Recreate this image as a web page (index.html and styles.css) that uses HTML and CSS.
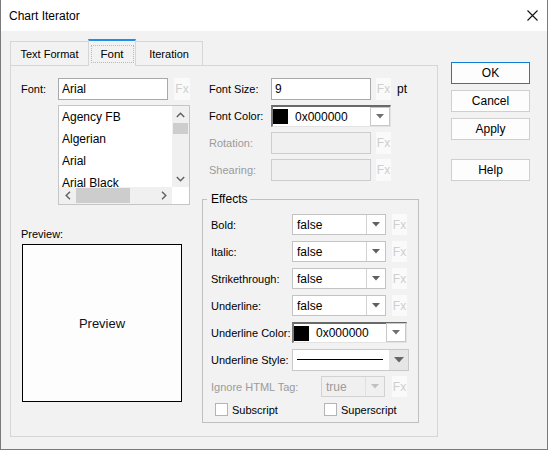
FILE: index.html
```html
<!DOCTYPE html>
<html>
<head>
<meta charset="utf-8">
<link rel="stylesheet" href="styles.css">
</head>
<body>
<div class="window">
  <div class="titlebar">
    <span class="title">Chart Iterator</span>
    <svg class="close" width="11" height="11" viewBox="0 0 11 11"><path d="M0.5 0.5L10.5 10.5M10.5 0.5L0.5 10.5" stroke="#111" stroke-width="1.1" fill="none"/></svg>
  </div>
  <div class="body">
    <div class="tabs-area">
      <div class="tabstrip">
        <div class="tab tab-text">Text Format</div>
        <div class="tab tab-font active"><span class="focus">Font</span></div>
        <div class="tab tab-iter">Iteration</div>
      </div>
      <div class="panel">
        <div class="left-col">
          <div class="row">
            <span class="lbl lbl-font">Font:</span>
            <div class="input w110">Arial</div>
            <span class="fx fx-font">Fx</span>
          </div>
          <div class="listbox">
            <div class="items">
              <div class="item">Agency FB</div>
              <div class="item">Algerian</div>
              <div class="item">Arial</div>
              <div class="item">Arial Black</div>
            </div>
            <div class="vscroll">
              <div class="sbtn"><svg width="9" height="6" viewBox="0 0 9 6"><polyline points="0.8,5 4.5,1.2 8.2,5" fill="none" stroke="#606060" stroke-width="1.4"/></svg></div>
              <div class="vthumb"></div>
              <div class="spacer"></div>
              <div class="sbtn"><svg width="9" height="6" viewBox="0 0 9 6"><polyline points="0.8,1 4.5,4.8 8.2,1" fill="none" stroke="#606060" stroke-width="1.4"/></svg></div>
            </div>
            <div class="hscroll">
              <div class="sbtn"><svg width="6" height="9" viewBox="0 0 6 9"><polyline points="5,0.8 1.2,4.5 5,8.2" fill="none" stroke="#606060" stroke-width="1.4"/></svg></div>
              <div class="hthumb"></div>
              <div class="spacer"></div>
              <div class="sbtn"><svg width="6" height="9" viewBox="0 0 6 9"><polyline points="1,0.8 4.8,4.5 1,8.2" fill="none" stroke="#606060" stroke-width="1.4"/></svg></div>
            </div>
            <div class="corner"></div>
          </div>
          <div class="preview-label">Preview:</div>
          <div class="preview">Preview</div>
        </div>
        <div class="right-col">
          <div class="row prow">
            <span class="lbl lbl-right">Font Size:</span>
            <div class="input w100">9</div>
            <span class="fx fx-right">Fx</span>
            <span class="unit">pt</span>
          </div>
          <div class="row prow">
            <span class="lbl lbl-right">Font Color:</span>
            <div class="ccombo w120">
              <span class="swatch"></span>
              <span class="ctext">0x000000</span>
              <span class="cbtn"><svg width="8" height="5" viewBox="0 0 8 5"><polygon points="0,0 8,0 4,4.5" fill="#707070"/></svg></span>
            </div>
          </div>
          <div class="row prow">
            <span class="lbl lbl-right dis">Rotation:</span>
            <div class="input w100 disabled"></div>
            <span class="fx fx-right">Fx</span>
          </div>
          <div class="row prow">
            <span class="lbl lbl-right dis">Shearing:</span>
            <div class="input w100 disabled"></div>
            <span class="fx fx-right">Fx</span>
          </div>
          <fieldset class="effects">
            <legend>Effects</legend>
            <div class="erow">
              <span class="elbl">Bold:</span>
              <div class="combo w94"><span class="ctext">false</span><span class="dbtn"><svg width="8" height="5" viewBox="0 0 8 5"><polygon points="0,0 8,0 4,4.5" fill="#606060"/></svg></span></div>
              <span class="fx fx-eff">Fx</span>
            </div>
            <div class="erow">
              <span class="elbl">Italic:</span>
              <div class="combo w94"><span class="ctext">false</span><span class="dbtn"><svg width="8" height="5" viewBox="0 0 8 5"><polygon points="0,0 8,0 4,4.5" fill="#606060"/></svg></span></div>
              <span class="fx fx-eff">Fx</span>
            </div>
            <div class="erow">
              <span class="elbl">Strikethrough:</span>
              <div class="combo w94"><span class="ctext">false</span><span class="dbtn"><svg width="8" height="5" viewBox="0 0 8 5"><polygon points="0,0 8,0 4,4.5" fill="#606060"/></svg></span></div>
              <span class="fx fx-eff">Fx</span>
            </div>
            <div class="erow">
              <span class="elbl">Underline:</span>
              <div class="combo w94"><span class="ctext">false</span><span class="dbtn"><svg width="8" height="5" viewBox="0 0 8 5"><polygon points="0,0 8,0 4,4.5" fill="#606060"/></svg></span></div>
              <span class="fx fx-eff">Fx</span>
            </div>
            <div class="erow">
              <span class="elbl">Underline Color:</span>
              <div class="ccombo w115">
                <span class="swatch"></span>
                <span class="ctext">0x000000</span>
                <span class="cbtn"><svg width="8" height="5" viewBox="0 0 8 5"><polygon points="0,0 8,0 4,4.5" fill="#707070"/></svg></span>
              </div>
            </div>
            <div class="erow">
              <span class="elbl">Underline Style:</span>
              <div class="scombo w117">
                <span class="sline"></span>
                <span class="sbtn2"><svg width="10" height="6" viewBox="0 0 10 6"><polygon points="0,0 10,0 5,5.5" fill="#666"/></svg></span>
              </div>
            </div>
            <div class="erow">
              <span class="elbl elbl-wide dis">Ignore HTML Tag:</span>
              <div class="combo w64 cdis"><span class="ctext">true</span><span class="dbtn"><svg width="8" height="5" viewBox="0 0 8 5"><polygon points="0,0 8,0 4,4.5" fill="#c0c0c0"/></svg></span></div>
              <span class="fx fx-ign">Fx</span>
            </div>
            <div class="crow">
              <span class="check check-sub"><span class="box"></span><span>Subscript</span></span>
              <span class="check"><span class="box"></span><span>Superscript</span></span>
            </div>
          </fieldset>
        </div>
      </div>
    </div>
    <div class="buttons">
      <div class="btn default">OK</div>
      <div class="btn">Cancel</div>
      <div class="btn">Apply</div>
      <div class="btn help">Help</div>
    </div>
  </div>
</div>
</body>
</html>
```

FILE: styles.css
```css
* { box-sizing: border-box; }
html, body { margin: 0; padding: 0; }
body {
  width: 548px;
  height: 450px;
  font-family: "Liberation Sans", Arial, sans-serif;
  font-size: 11px;
  color: #000;
  background: #f2f2f2;
  overflow: hidden;
}
.window {
  width: 548px;
  height: 450px;
  border: 1px solid #7a7a7a;
  border-top: none;
  display: flex;
  flex-direction: column;
  background: #f2f2f2;
}
.titlebar {
  height: 31px;
  background: #fff;
  display: flex;
  align-items: center;
  justify-content: space-between;
  padding: 0 9px 0 8px;
  flex: none;
}
.title { font-size: 12px; color: #000; }
.close { display: block; }
.body {
  flex: 1;
  display: flex;
  padding: 8px 0 0 9px;
}
.tabs-area {
  width: 428px;
  display: flex;
  flex-direction: column;
}
.tabstrip {
  height: 26px;
  display: flex;
  align-items: flex-end;
}
.tab {
  height: 24px;
  border: 1px solid #d6d6d6;
  border-bottom: none;
  display: flex;
  align-items: center;
  justify-content: center;
  padding-top: 1px;
  background: #f2f2f2;
}
.tab-text { width: 79px; }
.tab-font { width: 48px; margin-left: -1px; }
.tab-iter { width: 68px; margin-left: -1px; }
.tab.active {
  height: 27px;
  border-top: 2px solid #1e8ee6;
  margin-bottom: -1px;
  position: relative;
  z-index: 1;
  align-items: flex-start;
  padding-top: 4px;
  font-size: 11.5px;
}
.focus {
  width: 43px;
  height: 18px;
  border: 1px dotted #b9b9b9;
  display: flex;
  align-items: center;
  justify-content: center;
}
.panel {
  height: 372px;
  border: 1px solid #d6d6d6;
  display: flex;
  gap: 12px;
  padding: 12px 0 0 10px;
}
.left-col {
  width: 169px;
  display: flex;
  flex-direction: column;
}
.right-col {
  width: 217px;
  display: flex;
  flex-direction: column;
  gap: 5px;
}
.row {
  height: 22px;
  display: flex;
  align-items: center;
  flex: none;
}
.prow { padding-left: 7px; }
.lbl { flex: none; }
.lbl-font { width: 37px; }
.lbl-right { width: 62px; }
.dis { color: #9b9b9b; }
.input {
  height: 22px;
  border: 1px solid #a9a9a9;
  background: #fff;
  display: flex;
  align-items: center;
  padding-left: 3px;
  font-size: 12px;
}
.input.disabled { background: #f0f0f0; border-color: #cdcdcd; }
.w110 { width: 110px; }
.w100 { width: 100px; }
.w120 { width: 120px; }
.w115 { width: 115px; }
.w117 { width: 117px; }
.w94 { width: 94px; }
.w64 { width: 64px; }
.fx {
  height: 22px;
  background: #fafafa;
  color: #cfcfcf;
  font-size: 12px;
  display: flex;
  align-items: center;
  justify-content: center;
  flex: none;
}
.fx-font { width: 16px; margin-left: 6px; }
.fx-right { width: 15px; margin-left: 5px; }
.fx-eff { width: 15px; margin-left: 6px; height: 21px; }
.fx-ign { width: 15px; margin-left: 7px; height: 21px; }
.unit { margin-left: 6px; font-size: 12px; }
.listbox {
  margin: 5px 0 0 37px;
  width: 132px;
  height: 100px;
  border: 1px solid #c6c6c6;
  background: #fff;
  display: grid;
  grid-template-columns: 1fr 17px;
  grid-template-rows: 1fr 17px;
  flex: none;
}
.items { padding: 0 0 0 3px; overflow: hidden; }
.item { line-height: 22px; height: 22px; font-size: 12px; white-space: nowrap; }
.vscroll {
  background: #f0f0f0;
  display: flex;
  flex-direction: column;
}
.vscroll .sbtn { height: 17px; display: flex; align-items: center; justify-content: center; }
.vthumb { height: 11px; margin: 0 1px; background: #cdcdcd; }
.spacer { flex: 1; }
.hscroll {
  background: #f0f0f0;
  display: flex;
}
.hscroll .sbtn { width: 17px; display: flex; align-items: center; justify-content: center; }
.hthumb { width: 54px; margin: 1px 0; background: #cdcdcd; }
.corner { background: #fff; }
.preview-label { margin-top: 22px; line-height: 14px; height: 14px; }
.preview {
  margin: 3px 0 0 1px;
  width: 160px;
  height: 158px;
  border: 1px solid #000;
  background: #fcfdfc;
  display: flex;
  align-items: center;
  justify-content: center;
  font-size: 13px;
  color: #101020;
}
.combo {
  height: 21px;
  border: 1px solid #c3c3c3;
  background: #fff;
  display: flex;
  align-items: stretch;
  flex: none;
}
.combo .ctext { flex: 1; display: flex; align-items: center; padding-left: 4px; font-size: 12px; }
.dbtn {
  width: 19px;
  border-left: 1px solid #d2d2d2;
  display: flex;
  align-items: center;
  justify-content: center;
}
.combo.cdis { background: #f0f0f0; border-color: #d2d2d2; color: #9b9b9b; }
.combo.cdis .dbtn { border-left-color: #e0e0e0; }
.ccombo {
  height: 22px;
  border-top: 2px solid #6a6a6a;
  border-left: 2px solid #7a7a7a;
  border-right: 1px solid #e2e2e2;
  border-bottom: 1px solid #e2e2e2;
  background: #fff;
  display: flex;
  align-items: center;
  flex: none;
}
.erow .ccombo { height: 21px; }
.swatch { width: 15px; height: 15px; background: #000; flex: none; }
.ccombo .ctext { flex: 1; padding-left: 7px; font-size: 12px; }
.cbtn {
  width: 20px;
  height: 19px;
  border: 1px solid #c8c8c8;
  display: flex;
  align-items: center;
  justify-content: center;
  align-self: flex-end;
  flex: none;
}
.erow .cbtn { height: 19px; }
.scombo {
  height: 22px;
  border: 1px solid #c8c8c8;
  background: #fff;
  display: flex;
  align-items: center;
  flex: none;
  padding-left: 4px;
}
.sline { width: 86px; height: 1px; background: #000; flex: none; }
.sbtn2 {
  margin-left: auto;
  width: 19px;
  height: 20px;
  background: #e6e6e6;
  display: flex;
  align-items: center;
  justify-content: center;
}
.effects {
  margin: 5px 0 0 0;
  width: 217px;
  height: 232px;
  border: 1px solid #c0c0c0;
  padding: 7px 0 0 8px;
  display: flex;
  flex-direction: column;
  gap: 6px;
}
.effects legend {
  padding: 0 3px 0 4px;
  margin-left: -4px;
  line-height: 16px;
  font-size: 12px;
}
.erow {
  height: 21px;
  display: flex;
  align-items: center;
  flex: none;
}
.elbl { width: 81px; flex: none; white-space: nowrap; }
.elbl-wide { width: 110px; }
.crow {
  height: 13px;
  display: flex;
  align-items: center;
  padding-left: 4px;
  flex: none;
}
.check { display: flex; align-items: center; gap: 4px; }
.check-sub { width: 109px; }
.box { width: 13px; height: 13px; border: 1px solid #b4b4b4; background: #fff; flex: none; }
.buttons {
  margin: 23px 0 0 13px;
  width: 79px;
  display: flex;
  flex-direction: column;
  gap: 6px;
}
.btn {
  height: 22px;
  border: 1px solid #cfcfcf;
  background: #fdfdfd;
  display: flex;
  align-items: center;
  justify-content: center;
  font-size: 12px;
}
.btn.default { border-color: #0f7fd6; }
.btn.help { margin-top: 13px; }
```
